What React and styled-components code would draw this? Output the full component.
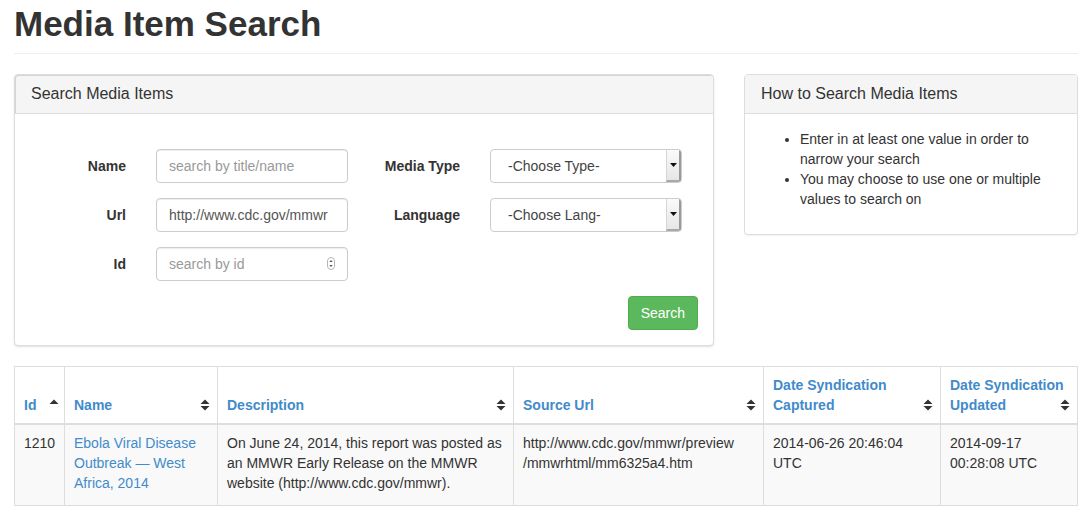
import React from "react";
import styled, { createGlobalStyle } from "styled-components";

const GlobalStyle = createGlobalStyle`
  body {
    margin: 0;
    background: #ffffff;
    font-family: "Liberation Sans", Arial, sans-serif;
    font-size: 14px;
    line-height: 20px;
    color: #333333;
  }
  * { box-sizing: border-box; }
`;

const Page = styled.div`
  padding: 0 9px 0 14px;
`;

const PageHeader = styled.div`
  padding-bottom: 9px;
  border-bottom: 1px solid #eeeeee;
  margin-bottom: 20px;
`;

const Title = styled.h1`
  margin: 5px 0 0;
  font-size: 35px;
  line-height: 1.1;
  font-weight: 700;
  color: #333333;
`;

const Columns = styled.div`
  display: flex;
  align-items: flex-start;
  gap: 30px;
  margin-bottom: 20px;
`;

const Panel = styled.div`
  flex: ${(p) => (p.$wide ? "0 0 700px" : "1 1 auto")};
  border: 1px solid #dddddd;
  border-radius: 4px;
  background: #ffffff;
  box-shadow: ${(p) => (p.$wide ? "0 1px 2px rgba(0,0,0,0.12)" : "0 1px 1px rgba(0,0,0,0.05)")};
`;

const PanelHeading = styled.div`
  padding: 10px 16px;
  background: #f5f5f5;
  border-bottom: 1px solid #dddddd;
  border-radius: 3px 3px 0 0;
  font-size: 16px;
  line-height: 18px;
  color: #333333;
  box-shadow: ${(p) => (p.$inset ? "inset 1px 1px 0 #d4d4d4" : "none")};
`;

const PanelBody = styled.div`
  padding: ${(p) => p.$pad || "15px"};
`;

const FormGrid = styled.div`
  display: grid;
  grid-template-columns: 126px 192px 142px 192px;
  row-gap: 15px;
  align-items: center;
`;

const Label = styled.label`
  font-weight: 700;
  text-align: right;
  padding-right: 30px;
`;

const FieldBox = styled.div`
  display: flex;
  align-items: center;
  height: 34px;
  padding: 0 12px;
  border: 1px solid #cccccc;
  border-radius: 4px;
  background: #ffffff;
  box-shadow: inset 0 1px 1px rgba(0, 0, 0, 0.075);
`;

const TextInput = styled.input`
  flex: 1;
  min-width: 0;
  border: 0;
  outline: 0;
  padding: 0;
  background: transparent;
  font-family: inherit;
  font-size: 14px;
  color: #555555;
  &::placeholder {
    color: #999999;
  }
`;

const SelectBox = styled.div`
  display: flex;
  height: 34px;
  border: 1px solid #cccccc;
  border-radius: 4px;
  background: #ffffff;
  overflow: hidden;
`;

const SelectText = styled.div`
  flex: 1;
  padding: 0 0 0 17px;
  display: flex;
  align-items: center;
  color: #444444;
  font-size: 14px;
`;

const SelectArrow = styled.div`
  flex: 0 0 15px;
  display: flex;
  align-items: center;
  justify-content: center;
  background: linear-gradient(#fafafa, #e6e6e6);
  border-left: 1px solid #d6d6d6;
  border-right: 2px solid #9a9a9a;
  border-bottom: 2px solid #a8a8a8;
`;

const Actions = styled.div`
  display: flex;
  justify-content: flex-end;
  margin-top: 15px;
`;

const SearchButton = styled.button`
  height: 34px;
  padding: 0 12px;
  border: 1px solid #4cae4c;
  border-radius: 4px;
  background: #5cb85c;
  color: #ffffff;
  font-family: inherit;
  font-size: 14px;
  cursor: pointer;
`;

const HelpList = styled.ul`
  margin: 0 0 10px;
  padding-left: 40px;
`;

const Table = styled.table`
  width: 100%;
  border-collapse: collapse;
  table-layout: fixed;
  border: 1px solid #dddddd;
`;

const Th = styled.th`
  position: relative;
  vertical-align: bottom;
  text-align: left;
  padding: 8px 8px 8px 9px;
  border: 1px solid #dddddd;
  border-bottom: 2px solid #dddddd;
  color: #428bca;
  font-weight: 700;
`;

/* sort indicator sits over the cell's bottom-right corner, like a background image */
const SortBadge = styled.span`
  position: absolute;
  bottom: 8px;
  height: 20px;
  display: flex;
  align-items: center;
  ${(p) => (p.$asc ? "left: 34px;" : "right: 7px;")}
`;

const Row = styled.tr`
  background: #f9f9f9;
`;

const Td = styled.td`
  vertical-align: top;
  padding: 8px 8px 12px 9px;
  border: 1px solid #dddddd;
  color: #333333;
`;

const Link = styled.a`
  color: #428bca;
  text-decoration: none;
`;

function SortIcon({ asc }) {
  return (
    <svg width="10" height="12" viewBox="0 0 10 12">
      <polygon points="0.5,5 5,0.5 9.5,5" fill="#333" />
      {!asc && <polygon points="0.5,7 5,11.5 9.5,7" fill="#333" />}
    </svg>
  );
}

function Spinner() {
  return (
    <svg width="8" height="13" viewBox="0 0 8 13">
      <rect x="0.5" y="0.5" width="7" height="12" rx="3.5" fill="#fff" stroke="#b5b5b5" />
      <polygon points="2.3,5 4,3 5.7,5" fill="#555" />
      <polygon points="2.3,8 4,10 5.7,8" fill="#555" />
    </svg>
  );
}

function Caret() {
  return (
    <svg width="7" height="4" viewBox="0 0 7 4">
      <polygon points="0,0 7,0 3.5,4" fill="#111" />
    </svg>
  );
}

const columns = [
  { label: "Id", width: 50, asc: true },
  { label: "Name", width: 153 },
  { label: "Description", width: 296 },
  { label: "Source Url", width: 250 },
  { label: "Date Syndication Captured", width: 177 },
  { label: "Date Syndication Updated" },
];

export default function App() {
  return (
    <Page>
      <GlobalStyle />
      <PageHeader>
        <Title>Media Item Search</Title>
      </PageHeader>

      <Columns>
        <Panel $wide>
          <PanelHeading $inset>Search Media Items</PanelHeading>
          <PanelBody $pad="35px 15px 15px">
            <FormGrid>
              <Label>Name</Label>
              <FieldBox>
                <TextInput placeholder="search by title/name" />
              </FieldBox>
              <Label>Media Type</Label>
              <SelectBox>
                <SelectText>-Choose Type-</SelectText>
                <SelectArrow>
                  <Caret />
                </SelectArrow>
              </SelectBox>

              <Label>Url</Label>
              <FieldBox>
                <TextInput defaultValue="http://www.cdc.gov/mmwr" />
              </FieldBox>
              <Label>Language</Label>
              <SelectBox>
                <SelectText>-Choose Lang-</SelectText>
                <SelectArrow>
                  <Caret />
                </SelectArrow>
              </SelectBox>

              <Label>Id</Label>
              <FieldBox>
                <TextInput placeholder="search by id" />
                <Spinner />
              </FieldBox>
            </FormGrid>
            <Actions>
              <SearchButton>Search</SearchButton>
            </Actions>
          </PanelBody>
        </Panel>

        <Panel>
          <PanelHeading>How to Search Media Items</PanelHeading>
          <PanelBody>
            <HelpList>
              <li>Enter in at least one value in order to narrow your search</li>
              <li>You may choose to use one or multiple values to search on</li>
            </HelpList>
          </PanelBody>
        </Panel>
      </Columns>

      <Table>
        <colgroup>
          {columns.map((c) => (
            <col key={c.label} style={c.width ? { width: c.width } : undefined} />
          ))}
        </colgroup>
        <thead>
          <tr>
            {columns.map((c) => (
              <Th key={c.label}>
                {c.label}
                <SortBadge $asc={c.asc}>
                  <SortIcon asc={c.asc} />
                </SortBadge>
              </Th>
            ))}
          </tr>
        </thead>
        <tbody>
          <Row>
            <Td>1210</Td>
            <Td>
              <Link href="#">Ebola Viral Disease Outbreak — West Africa, 2014</Link>
            </Td>
            <Td>
              On June 24, 2014, this report was posted as an MMWR Early Release on the MMWR
              website (http://www.cdc.gov/mmwr).
            </Td>
            <Td>
              http://www.cdc.gov/mmwr/preview<wbr />/mmwrhtml/mm6325a4.htm
            </Td>
            <Td>2014-06-26 20:46:04 UTC</Td>
            <Td>2014-09-17 00:28:08 UTC</Td>
          </Row>
        </tbody>
      </Table>
    </Page>
  );
}
